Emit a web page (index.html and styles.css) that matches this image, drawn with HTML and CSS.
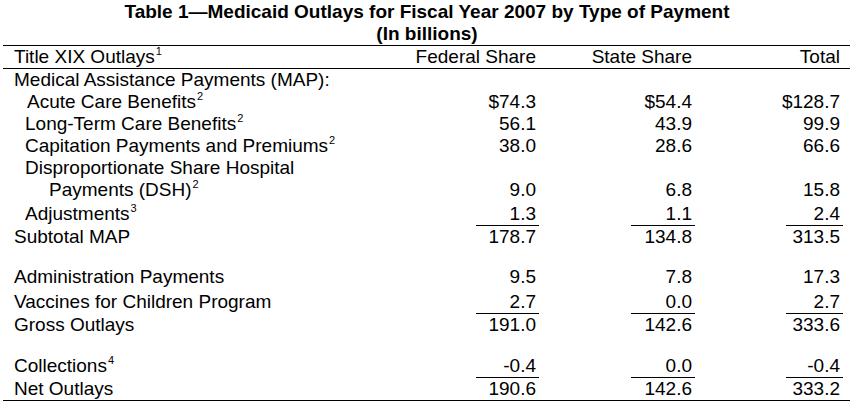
FILE: index.html
```html
<!DOCTYPE html>
<html lang="en">
<head>
<meta charset="utf-8">
<title>Table 1—Medicaid Outlays for Fiscal Year 2007</title>
<link rel="stylesheet" href="styles.css">
</head>
<body>
<h1 class="title">Table 1—Medicaid Outlays for Fiscal Year 2007 by Type of Payment<br>(In billions)</h1>
<div class="table">
  <div class="row head">
    <div class="label l1">Title XIX Outlays<sup>1</sup></div>
    <div class="num fed">Federal Share</div>
    <div class="num state">State Share</div>
    <div class="num total">Total</div>
  </div>
  <div class="row">
    <div class="label l1">Medical Assistance Payments (MAP):</div>
  </div>
  <div class="row">
    <div class="label l2a">Acute Care Benefits<sup>2</sup></div>
    <div class="num fed">$74.3</div>
    <div class="num state">$54.4</div>
    <div class="num total">$128.7</div>
  </div>
  <div class="row">
    <div class="label l2">Long-Term Care Benefits<sup>2</sup></div>
    <div class="num fed">56.1</div>
    <div class="num state">43.9</div>
    <div class="num total">99.9</div>
  </div>
  <div class="row">
    <div class="label l2">Capitation Payments and Premiums<sup>2</sup></div>
    <div class="num fed">38.0</div>
    <div class="num state">28.6</div>
    <div class="num total">66.6</div>
  </div>
  <div class="row">
    <div class="label l2">Disproportionate Share Hospital</div>
  </div>
  <div class="row">
    <div class="label l3">Payments (DSH)<sup>2</sup></div>
    <div class="num fed">9.0</div>
    <div class="num state">6.8</div>
    <div class="num total">15.8</div>
  </div>
  <div class="row sp2">
    <div class="label l2">Adjustments<sup>3</sup></div>
    <div class="num fed">1.3</div>
    <div class="num state">1.1</div>
    <div class="num total">2.4</div>
  </div>
  <div class="row rule">
    <div class="label l1">Subtotal MAP</div>
    <div class="num fed">178.7</div>
    <div class="num state">134.8</div>
    <div class="num total">313.5</div>
  </div>
  <div class="row sp18">
    <div class="label l1">Administration Payments</div>
    <div class="num fed">9.5</div>
    <div class="num state">7.8</div>
    <div class="num total">17.3</div>
  </div>
  <div class="row sp3">
    <div class="label l1">Vaccines for Children Program</div>
    <div class="num fed">2.7</div>
    <div class="num state">0.0</div>
    <div class="num total">2.7</div>
  </div>
  <div class="row rule">
    <div class="label l1">Gross Outlays</div>
    <div class="num fed">191.0</div>
    <div class="num state">142.6</div>
    <div class="num total">333.6</div>
  </div>
  <div class="row sp19">
    <div class="label l1">Collections<sup>4</sup></div>
    <div class="num fed">-0.4</div>
    <div class="num state">0.0</div>
    <div class="num total">-0.4</div>
  </div>
  <div class="row rule">
    <div class="label l1">Net Outlays</div>
    <div class="num fed">190.6</div>
    <div class="num state">142.6</div>
    <div class="num total">333.2</div>
  </div>
</div>
</body>
</html>
```

FILE: styles.css
```css
html, body {
  margin: 0;
  padding: 0;
  background: #ffffff;
}
body {
  font-family: "Liberation Sans", Arial, sans-serif;
  color: #000000;
  overflow: hidden;
}
.title {
  margin: 0;
  padding-top: 1px;
  font-size: 19px;
  line-height: 22px;
  font-weight: bold;
  text-align: center;
}
.table {
  margin-left: 3px;
  width: 847px;
  border-top: 1px solid #000;
  border-bottom: 1px solid #000;
}
.row {
  display: grid;
  grid-template-columns: 473px 63px 92px 64px 91px 57px 7px;
  font-size: 19px;
  line-height: 22px;
  white-space: nowrap;
}
.head {
  border-bottom: 1px solid #000;
}
.label {
  grid-column: 1;
}
.l1 { padding-left: 11px; }
.l2 { padding-left: 22px; }
.l2a { padding-left: 24px; }
.l3 { padding-left: 46px; }
.num {
  display: flex;
  justify-content: flex-end;
  padding-right: 3px;
}
.fed { grid-column: 2; }
.state { grid-column: 4; }
.total { grid-column: 6; }
.rule > * {
  border-top: 1px solid transparent;
}
.rule > .num {
  border-top-color: #000;
}
.sp2 { margin-top: 2px; }
.sp3 { margin-top: 3px; }
.sp18 { margin-top: 18px; }
.sp19 { margin-top: 19px; }
sup {
  font-size: 11px;
  line-height: 0;
  vertical-align: 8px;
  margin-left: 1px;
}
```
